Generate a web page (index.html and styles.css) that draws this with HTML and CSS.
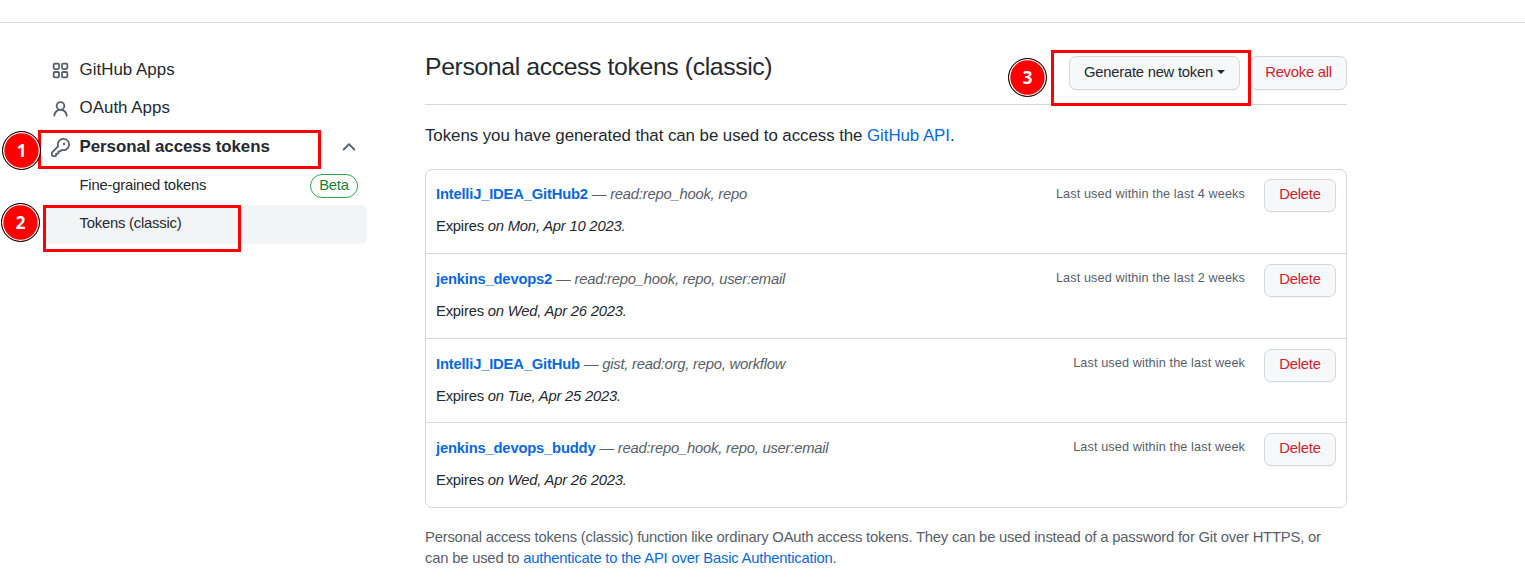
FILE: index.html
```html
<!DOCTYPE html>
<html lang="en">
<head>
<meta charset="utf-8">
<title>Personal access tokens (classic)</title>
<link rel="stylesheet" href="styles.css">
</head>
<body>
<div class="topbar"></div>
<div class="layout">
  <nav class="sidebar">
    <a class="nav-item"><svg class="icon" viewBox="0 0 16 16" fill="none" stroke="currentColor" stroke-width="1.5"><rect x="2.25" y="2.25" width="4.5" height="4.5" rx="1"/><rect x="9.25" y="2.25" width="4.5" height="4.5" rx="1"/><rect x="2.25" y="9.25" width="4.5" height="4.5" rx="1"/><rect x="9.25" y="9.25" width="4.5" height="4.5" rx="1"/></svg><span>GitHub Apps</span></a>
    <a class="nav-item oauth"><svg class="icon" viewBox="0 0 16 16" fill="currentColor"><path d="M10.561 8.073a6.005 6.005 0 0 1 3.432 5.142.75.75 0 1 1-1.498.07 4.5 4.5 0 0 0-8.99 0 .75.75 0 0 1-1.498-.07 6.004 6.004 0 0 1 3.431-5.142 3.999 3.999 0 1 1 5.123 0ZM10.5 5a2.5 2.5 0 1 0-5 0 2.5 2.5 0 0 0 5 0Z"/></svg><span>OAuth Apps</span></a>
    <a class="nav-item nav-open"><svg class="icon" viewBox="0 0 16 16" fill="currentColor"><path d="M10.5 0a5.499 5.499 0 1 1-1.288 10.848l-.932.932a.749.749 0 0 1-.53.22H7v.75a.749.749 0 0 1-.22.53l-.5.5a.749.749 0 0 1-.53.22H5v.75a.749.749 0 0 1-.22.53l-.5.5a.749.749 0 0 1-.53.22h-2A1.75 1.75 0 0 1 0 14.25v-2c0-.199.079-.389.22-.53l4.932-4.932A5.5 5.5 0 0 1 10.5 0Zm-4 5.5c-.001.431.069.86.205 1.269a.75.75 0 0 1-.181.768L1.5 12.56v1.69c0 .138.112.25.25.25h1.69l.06-.06v-1.19a.75.75 0 0 1 .75-.75h1.19l.06-.06v-1.19a.75.75 0 0 1 .75-.75h1.19l1.023-1.025a.75.75 0 0 1 .768-.18A4 4 0 1 0 6.5 5.5ZM11 6a1 1 0 1 1 0-2 1 1 0 0 1 0 2Z"/></svg><span>Personal access tokens</span><svg class="chevron" viewBox="0 0 16 16" fill="currentColor"><path d="M3.22 10.53a.749.749 0 0 1 0-1.06l4.25-4.25a.749.749 0 0 1 1.06 0l4.25 4.25a.749.749 0 1 1-1.06 1.06L8 6.811 4.28 10.53a.749.749 0 0 1-1.06 0Z"/></svg></a>
    <a class="sub-item"><span>Fine-grained tokens</span><span class="beta">Beta</span></a>
    <a class="sub-item current"><span>Tokens (classic)</span></a>
  </nav>
  <main class="content">
    <header class="head">
      <h1>Personal access tokens (classic)</h1>
      <div class="actions"><button class="btn generate"><span>Generate new token</span><i class="caret"></i></button><button class="btn danger revoke">Revoke all</button></div>
    </header>
    <p class="intro">Tokens you have generated that can be used to access the <a>GitHub API</a>.</p>
    <ul class="tokens">
      <li><div class="info"><p class="name"><a>IntelliJ_IDEA_GitHub2</a> <span>— <em>read:repo_hook, repo</em></span></p><p>Expires <em>on Mon, Apr 10 2023.</em></p></div><span class="used">Last used within the last 4 weeks</span><button class="btn danger">Delete</button></li>
      <li><div class="info"><p class="name"><a>jenkins_devops2</a> <span>— <em>read:repo_hook, repo, user:email</em></span></p><p>Expires <em>on Wed, Apr 26 2023.</em></p></div><span class="used">Last used within the last 2 weeks</span><button class="btn danger">Delete</button></li>
      <li><div class="info"><p class="name"><a>IntelliJ_IDEA_GitHub</a> <span>— <em>gist, read:org, repo, workflow</em></span></p><p>Expires <em>on Tue, Apr 25 2023.</em></p></div><span class="used">Last used within the last week</span><button class="btn danger">Delete</button></li>
      <li><div class="info"><p class="name"><a>jenkins_devops_buddy</a> <span>— <em>read:repo_hook, repo, user:email</em></span></p><p>Expires <em>on Wed, Apr 26 2023.</em></p></div><span class="used">Last used within the last week</span><button class="btn danger">Delete</button></li>
    </ul>
    <p class="note">Personal access tokens (classic) function like ordinary OAuth access tokens. They can be used instead of a password for Git over HTTPS, or<br>can be used to <a>authenticate to the API over Basic Authentication</a>.</p>
  </main>
</div>
<div class="frame frame-1"></div><div class="frame frame-2"></div><div class="frame frame-3"></div>
<div class="step step-1">1</div><div class="step step-2">2</div><div class="step step-3">3</div>
</body>
</html>
```
FILE: styles.css
```css
* { box-sizing: border-box; }
body { margin: 0; height: 580px; overflow: hidden; position: relative; background: #fff; color: #24292f; font: 14.8px/22px "Liberation Sans", Arial, sans-serif; letter-spacing: -0.21px; }
p, h1, ul { margin: 0; padding: 0; }
a { color: #0969da; }
.topbar { height: 23px; border-bottom: 1px solid #d0d7de; }
.layout { display: flex; }
.sidebar { width: 325px; margin-left: 42px; padding-top: 28px; }
.nav-item, .sub-item { display: flex; align-items: center; height: 38.5px; color: #24292f; }
.nav-item { padding: 0 8px 0 9px; font-size: 16.9px; letter-spacing: 0.03px; }
.oauth { padding-bottom: 1px; }
.icon { width: 19px; height: 19px; margin: 0 9.5px 0 0; color: #57606a; }
.nav-open { font-weight: bold; letter-spacing: -0.06px; }
.nav-open span { flex: 1; }
.oauth .icon { margin-top: 2px; }
.chevron { width: 20px; height: 20px; color: #57606a; }
.sub-item { padding: 0 9px 2px 37.5px; justify-content: space-between; }
.current { background: #f3f4f6; border-radius: 6px; }
.beta { height: 24px; width: 48px; border: 1px solid #2da44e; border-radius: 12px; color: #1a7f37; text-align: center; line-height: 21px; margin-top: 3px; }
.content { width: 922px; margin-left: 58px; padding-top: 31px; }
.head { display: flex; justify-content: space-between; height: 51px; border-bottom: 1px solid #d0d7de; }
h1 { font-size: 24.8px; font-weight: normal; line-height: 26px; letter-spacing: -0.39px; }
.actions { display: flex; gap: 10px; padding-top: 2px; }
.btn { height: 34px; padding: 0 0 2px; border: 1px solid #d5d8da; border-radius: 7px; background: #f6f8fa; color: #24292f; font: inherit; letter-spacing: -0.25px; box-shadow: 0 1px 0 rgba(27,31,36,.04); }
.generate { width: 171px; display: flex; align-items: center; justify-content: center; gap: 4px; }
.caret { border: 4.5px solid transparent; border-top-color: #24292f; border-bottom: 0; }
.revoke { width: 97px; }
.btn.danger { color: #cf222e; }
.intro { margin-top: 19px; font-size: 16.9px; line-height: 24px; letter-spacing: -0.07px; }
.tokens { list-style: none; margin-top: 21px; border: 1px solid #d0d7de; border-radius: 7px; }
li { display: flex; height: 84.5px; padding: 9.7px 10px 0; border-top: 1px solid #d0d7de; }
li:first-child { border-top: 0; height: 83.4px; padding-top: 9px; }
.info { flex: 1; padding-top: 4px; }
.info p + p { margin-top: 10.2px; }
.name a { font-weight: bold; }
.name span { color: #57606a; letter-spacing: -0.23px; }
.used { color: #57606a; font-size: 12.7px; line-height: 22px; padding-top: 3.3px; margin-right: 19px; letter-spacing: 0.11px; }
li:first-child .used { padding-top: 4px; }
li .btn { width: 72px; height: 33px; padding-bottom: 3px; }
.note { color: #57606a; margin-top: 19px; line-height: 21px; white-space: nowrap; letter-spacing: -0.2px; }
.frame { position: absolute; border: 3px solid #f00; }
.frame-1 { left: 38px; top: 130px; width: 283px; height: 39px; }
.frame-2 { left: 43px; top: 205px; width: 198px; height: 47px; }
.frame-3 { left: 1051px; top: 50px; width: 200px; height: 56px; }
.step { position: absolute; width: 39px; height: 39px; border: 1px solid #000; border-radius: 50%; background: #f00; box-shadow: inset 0 0 0 1.3px #fff; color: #fff; font: bold 17px/38px "Open Sans", sans-serif; text-align: center; }
.step-1 { left: 2px; top: 131px; }
.step-2 { left: 1px; top: 203px; }
.step-3 { left: 1008px; top: 58px; }
```
